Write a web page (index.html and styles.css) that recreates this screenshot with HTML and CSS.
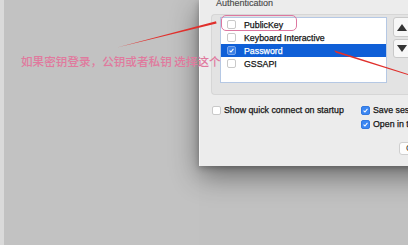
FILE: index.html
```html
<!DOCTYPE html>
<html>
<head>
<meta charset="utf-8">
<link rel="stylesheet" href="styles.css">
</head>
<body>
<div class="screen">
  <div class="backdrop"></div>
  <div class="side">
    <div class="dialog">
      <div class="section-label">Authentication</div>
      <div class="group">
        <div class="listbox">
          <div class="row"><span class="cb"></span><span class="label">PublicKey</span></div>
          <div class="row"><span class="cb"></span><span class="label">Keyboard Interactive</span></div>
          <div class="row selected"><span class="cb checked"><svg viewBox="0 0 9 9" width="9" height="9"><polyline points="2,4.6 3.8,6.4 7,2.4" fill="none" stroke="#fff" stroke-width="1.3"/></svg></span><span class="label">Password</span></div>
          <div class="row"><span class="cb"></span><span class="label">GSSAPI</span></div>
        </div>
        <div class="order-buttons">
          <div class="order-btn up"><span class="tri-up"></span></div>
          <div class="order-btn down"><span class="tri-down"></span></div>
        </div>
      </div>
      <div class="options">
        <div class="opt-col first">
          <div class="opt"><span class="cb small"></span><span>Show quick connect on startup</span></div>
        </div>
        <div class="opt-col">
          <div class="opt"><span class="cb small checked"><svg viewBox="0 0 9 9" width="9" height="9"><polyline points="2,4.6 3.8,6.4 7,2.4" fill="none" stroke="#fff" stroke-width="1.3"/></svg></span><span>Save session</span></div>
          <div class="opt"><span class="cb small checked"><svg viewBox="0 0 9 9" width="9" height="9"><polyline points="2,4.6 3.8,6.4 7,2.4" fill="none" stroke="#fff" stroke-width="1.3"/></svg></span><span>Open in tab</span></div>
        </div>
      </div>
      <div class="footer"><div class="btn">Cancel</div></div>
    </div>
  </div>

  <div class="note">如果密钥登录，公钥或者私钥 选择这个</div>
  <div class="highlight"></div>
  <svg class="arrows" width="408" height="245" viewBox="0 0 408 245">
    <polygon points="117,47.4 216,21.2 216.6,23.4" fill="#e0302c"/>
    <polygon points="334,50.2 336,52.8 410,75.6 410,74.6" fill="#e0302c"/>
  </svg>
</div>
</body>
</html>
```
FILE: styles.css
```css
html, body {
  margin: 0;
  padding: 0;
}
body {
  width: 408px;
  height: 245px;
  overflow: hidden;
  background: #c1c1c1;
  font-family: "Liberation Sans", Arial, sans-serif;
}
.screen {
  position: relative;
  display: flex;
  width: 408px;
  height: 245px;
}
.backdrop {
  width: 195px;
  flex-shrink: 0;
  border-left: 4px solid #dadada;
  background: #c2c2c2;
}
.side {
  flex: 1;
  display: flex;
  flex-direction: column;
}
.dialog {
  width: 260px;
  height: 166px;
  flex-shrink: 0;
  box-sizing: border-box;
  background: #ececec;
  border-left: 1px solid #f6f6f6;
  box-shadow: 0 10px 26px rgba(0,0,0,0.45), 0 2px 6px rgba(0,0,0,0.25);
  display: flex;
  flex-direction: column;
}
.section-label {
  font-size: 9px;
  line-height: 10px;
  margin-top: -2px;
  padding-left: 16px;
  color: #4a4a4a;
  -webkit-text-stroke: 0.15px #4a4a4a;
}
.group {
  margin-top: 6px;
  margin-left: 11px;
  padding: 2px 0 11px 8px;
  background: #e3e3e3;
  border: 1px solid #d6d6d6;
  border-right: none;
  border-radius: 4px 0 0 4px;
  display: flex;
  gap: 6px;
}
.listbox {
  width: 167px;
  height: 66px;
  box-sizing: border-box;
  background: #fff;
  border: 1px solid #b5c8e4;
}
.row {
  height: 13px;
  display: flex;
  align-items: center;
  padding-left: 6px;
  font-size: 8.8px;
  color: #141414;
  -webkit-text-stroke: 0.25px #141414;
}
.row .label {
  margin-left: 8px;
}
.row.selected {
  background: #0f5fd7;
  color: #fff;
  -webkit-text-stroke: 0.25px #fff;
}
.cb {
  width: 9px;
  height: 9px;
  box-sizing: border-box;
  border: 1px solid #c9c9c9;
  border-radius: 2px;
  background: #fff;
  flex-shrink: 0;
  display: flex;
  align-items: center;
  justify-content: center;
}
.cb svg {
  display: block;
}
.cb.checked {
  background: #3c87f2;
  border-color: #3378de;
}
.row.selected .cb.checked {
  background: #3a7fe6;
  border-color: #7aa7ec;
}
.order-buttons {
  display: flex;
  flex-direction: column;
  gap: 2px;
}
.order-btn {
  width: 22px;
  box-sizing: border-box;
  background: #f7f7f7;
  border: 1px solid #c9c9c9;
  border-radius: 3px;
  display: flex;
  align-items: center;
  padding-left: 3px;
}
.order-btn.up { height: 20px; }
.order-btn.down { height: 19px; }
.tri-up {
  width: 0;
  height: 0;
  border-left: 5px solid transparent;
  border-right: 5px solid transparent;
  border-bottom: 7px solid #333;
}
.tri-down {
  width: 0;
  height: 0;
  border-left: 5px solid transparent;
  border-right: 5px solid transparent;
  border-top: 7px solid #333;
}
.options {
  display: flex;
  margin-top: 8px;
  padding-left: 12px;
}
.opt-col.first {
  width: 149px;
}
.opt {
  height: 14px;
  display: flex;
  align-items: center;
  gap: 3px;
  font-size: 8.8px;
  color: #141414;
  -webkit-text-stroke: 0.25px #141414;
}
.footer {
  margin-top: 11px;
  padding-left: 199px;
}
.btn {
  width: 40px;
  height: 13px;
  box-sizing: border-box;
  background: #fdfdfd;
  border: 1px solid #cfcfcf;
  border-radius: 3px;
  font-size: 8.8px;
  line-height: 11px;
  padding-left: 6px;
  color: #1c1c1c;
}
.note {
  position: absolute;
  left: 21px;
  top: 55px;
  font-family: "Noto Sans CJK SC", sans-serif;
  font-size: 11.6px;
  font-weight: 500;
  line-height: 12px;
  color: #e07a9e;
  white-space: nowrap;
}
.highlight {
  position: absolute;
  left: 221px;
  top: 15px;
  width: 76px;
  height: 16px;
  box-sizing: border-box;
  border: 1.5px solid #dd77a0;
  border-radius: 5px;
}
.arrows {
  position: absolute;
  left: 0;
  top: 0;
  pointer-events: none;
}
```
